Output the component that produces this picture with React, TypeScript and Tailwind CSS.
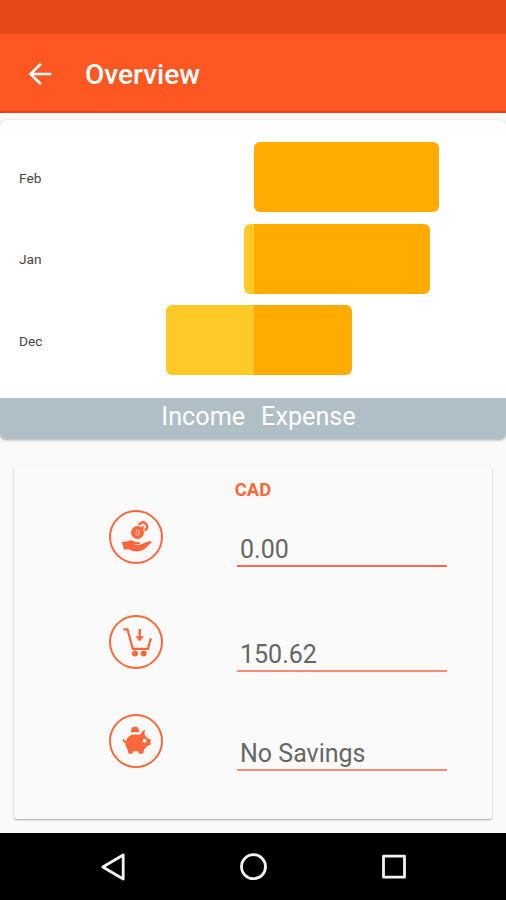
import React from "react";

interface MonthBar {
  month: string;
  income: number;
  expense: number;
}

const months: MonthBar[] = [
  { month: "Feb", income: 0, expense: 185.5 },
  { month: "Jan", income: 10, expense: 176 },
  { month: "Dec", income: 88, expense: 98.5 },
];

const IncomeIcon = () => (
  <svg viewBox="0 0 54 54" className="h-[54px] w-[54px]" fill="none" stroke="#f9673a">
    <circle cx="27" cy="27" r="26" strokeWidth="2" />
    <path d="M30 15.2a4.2 4.2 0 1 1 5.6 5.3" strokeWidth="2.6" />
    <path d="M33.8 15.8v3.4" strokeWidth="1.8" />
    <circle cx="28.5" cy="22.5" r="6.5" fill="#f9673a" stroke="none" />
    <rect x="27.2" y="20" width="2.8" height="5" rx="1" stroke="#fcb49c" strokeWidth="1.2" />
    <path
      d="M13 31.7l4.7-.2c2-.8 4.3-1.7 6.5-.6 1.6.8 3 1.1 5.6 1 1.7.1 1.8 1.5.5 2l-5.3.5c2.7 1.1 5.7.6 7.8-.5l6.5-2.4c2-.7 3.8-.1 3.2.9l-5.5 5.4c-2.2 2.2-5.4 3.4-8.2 3.6-3.5.2-6-.8-8.8-2-1.5-.5-3.4-.2-5.1.4z"
      fill="#f9673a"
      stroke="none"
    />
  </svg>
);

const ExpenseIcon = () => (
  <svg viewBox="0 0 54 54" className="h-[54px] w-[54px]" fill="none" stroke="#f9673a">
    <circle cx="27" cy="27" r="26" strokeWidth="2" />
    <path d="M14.3 14.3h4.2l5.3 19.5h15.1l3-10.5" strokeWidth="2.2" />
    <path d="M30.7 14v9" strokeWidth="2.4" />
    <path d="M26.3 21.3h8.8l-4.4 5.2z" fill="#f9673a" stroke="none" />
    <circle cx="26" cy="38.6" r="3" fill="#f9673a" stroke="none" />
    <circle cx="34.7" cy="38.6" r="3" fill="#f9673a" stroke="none" />
  </svg>
);

const SavingsIcon = () => (
  <svg viewBox="0 0 54 54" className="h-[54px] w-[54px]" fill="none" stroke="#f9673a">
    <circle cx="27" cy="27" r="26" strokeWidth="2" />
    <path d="M22.5 18.4a4 4 0 1 1 7 0q-3.6-.8-7 0z" fill="#f9673a" stroke="none" />
    <path
      d="M35.9 15.8l-.4 4.7 2.9 3.7 3.2 1v5.5l-3.6 1.5-2.8 3.2-1.3 4.4h-4l-.8-2.6h-4.8l-1 2.6h-3.8l-1.5-5.5c-1.1-1.5-1.6-3.2-1.5-5-1.7-.3-2.7-1.7-2.8-4.2h1.4c.2 1.4.8 2 2 1.8 1.3-4.1 4-6.1 7.8-6.3h6.4c1-2.2 2.4-4 4.6-4.8z"
      fill="#f9673a"
      stroke="none"
    />
    <circle cx="35.6" cy="26.7" r="2" fill="#fafafa" stroke="none" />
  </svg>
);

interface SummaryRowProps {
  icon: React.ReactNode;
  value: string;
  className?: string;
  lineClass?: string;
}

const SummaryRow = ({ icon, value, className = "", lineClass = "border-[#fb8a72]" }: SummaryRowProps) => (
  <div className={`flex h-[57px] w-full items-start pl-[95px] ${className}`}>
    {icon}
    <div
      className={`ml-[74px] flex h-[57px] w-[210px] items-end border-b-2 pl-[3px] text-[25px] leading-[30px] text-[#666] ${lineClass}`}
    >
      {value}
    </div>
  </div>
);

const ChartRow = ({ month, income, expense }: MonthBar) => (
  <div className="flex h-[70px] items-center">
    <span className="w-[54px] pl-[19px] pt-[2px] text-[13.7px] text-[#444]">{month}</span>
    <div className="flex h-full w-[199.5px] justify-end">
      <div className="h-full rounded-l-md bg-[#ffca28]" style={{ width: income }} />
    </div>
    <div
      className={`h-full bg-[#ffab00] ${income ? "rounded-r-md" : "rounded-md"}`}
      style={{ width: expense }}
    />
  </div>
);

const App = () => {
  return (
    <div className="flex h-[900px] w-[506px] flex-col overflow-hidden bg-[#fafafa] font-['Roboto',sans-serif]">
      <div className="h-[34px] shrink-0 bg-[#e64a19]" />
      <header className="flex h-[79px] shrink-0 items-center border-b-2 border-[#e5431b] bg-[#ff5722] pl-[28px] pt-[2px] text-white">
        <svg viewBox="0 0 24 24" className="h-6 w-6" fill="none" stroke="currentColor" strokeWidth="2.6">
          <path d="M23.3 12H2.5M13 1.8L2.5 12 13 22.2" />
        </svg>
        <h1 className="ml-[33px] pt-[2px] text-[28px] font-medium">Overview</h1>
      </header>

      <main className="flex grow flex-col pt-[7px]">
        <section className="flex h-[319px] shrink-0 flex-col overflow-hidden rounded-md bg-white shadow-[0_1px_3px_rgba(0,0,0,0.35)]">
          <div className="flex h-[278px] flex-col gap-[11.5px] pt-[22px]">
            {months.map((m) => (
              <ChartRow key={m.month} {...m} />
            ))}
          </div>
          <div className="flex h-[41px] justify-center gap-4 bg-[#b0bec5] pl-[11px] text-[25.2px] leading-[38px] text-white">
            <span>Income</span>
            <span>Expense</span>
          </div>
        </section>

        <section className="mx-[14px] mt-[28px] flex h-[352px] shrink-0 flex-col items-center rounded-[3px] bg-[#fafafa] pt-[12px] shadow-[0_1px_2px_rgba(0,0,0,0.35)]">
          <h2 className="h-[31px] pt-px text-[18.5px] leading-[21px] font-bold text-[#f9673a]">CAD</h2>
          <SummaryRow icon={<IncomeIcon />} value="0.00" lineClass="border-[#f9694a]" />
          <SummaryRow icon={<ExpenseIcon />} value="150.62" className="mt-[48px]" />
          <SummaryRow icon={<SavingsIcon />} value="No Savings" className="mt-[42px]" />
        </section>
      </main>

      <nav className="flex h-[67px] shrink-0 items-center justify-between bg-black px-[99px]">
        <svg viewBox="0 0 28 28" className="h-7 w-7" fill="none" stroke="#f2f2f2" strokeWidth="2.8" strokeLinejoin="round">
          <path d="M24.2 2L3.8 14l20.4 12z" />
        </svg>
        <svg viewBox="0 0 28 28" className="h-7 w-7" fill="none" stroke="#f2f2f2" strokeWidth="2.8">
          <circle cx="14.5" cy="13.7" r="12" />
        </svg>
        <svg viewBox="0 0 28 28" className="h-7 w-7" fill="none" stroke="#f2f2f2" strokeWidth="2.8" strokeLinejoin="round">
          <rect x="4.5" y="3.2" width="21" height="21" />
        </svg>
      </nav>
    </div>
  );
};

export default App;
